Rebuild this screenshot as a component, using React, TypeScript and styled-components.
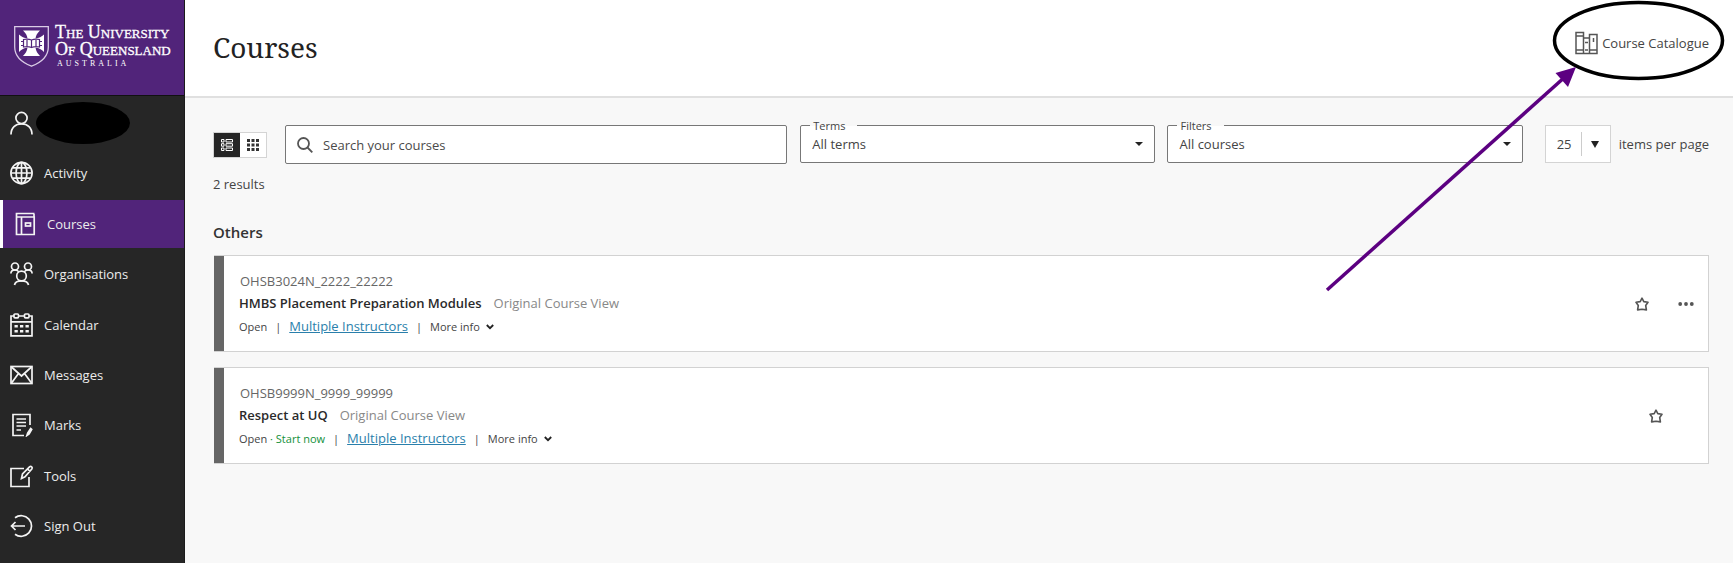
import React from 'react';
import styled, { createGlobalStyle } from 'styled-components';

const GlobalStyle = createGlobalStyle`
  *, *::before, *::after { box-sizing: border-box; }
  body {
    margin: 0;
    background: #f8f8f8;
    color: #444;
    font-family: "Open Sans", "Noto Sans", sans-serif;
    font-size: 13px;
    line-height: 20px;
  }
  button, input, select { font: inherit; color: inherit; }
  a { color: inherit; }
`;

const Page = styled.div`
  position: relative;
  display: flex;
  min-height: 100vh;
`;

const Sidebar = styled.aside`
  flex: none;
  width: 185px;
  display: flex;
  flex-direction: column;
  background: #262626;
  border-right: 1px solid #1b1b1b;
`;

const Brand = styled.a`
  display: flex;
  align-items: center;
  gap: 6px;
  height: 96px;
  padding: 0 0 2px 14px;
  background: #51247a;
  border-bottom: 1px solid #111;
  color: #fff;
  text-decoration: none;
`;

const BrandText = styled.span`
  display: flex;
  flex-direction: column;
  font-family: "Liberation Serif", serif;
  font-size: 18px;
  line-height: 17px;
  font-variant: small-caps;
  white-space: nowrap;
  -webkit-text-stroke: 0.3px #fff;
`;

const BrandCountry = styled.span`
  padding-left: 2px;
  font-size: 8px;
  line-height: 12px;
  font-variant: normal;
  letter-spacing: 3px;
  -webkit-text-stroke: 0;
`;

const NavList = styled.ul`
  flex: 1;
  display: flex;
  flex-direction: column;
  justify-content: space-between;
  max-height: 467px;
  margin: 0;
  padding: 3px 0 13px;
  list-style: none;
`;

const NavLink = styled.a<{ $active?: boolean }>`
  display: flex;
  align-items: center;
  gap: ${(p) => (p.$active ? 9 : 10)}px;
  height: 48px;
  padding-left: ${(p) => (p.$active ? 11 : 10)}px;
  border-left: ${(p) => (p.$active ? '3px solid #fff' : '0')};
  background: ${(p) => (p.$active ? '#51247a' : 'transparent')};
  color: #ececec;
  text-decoration: none;
  svg { flex: none; }
`;

const Redaction = styled.span`
  width: 94px;
  height: 42px;
  margin-left: -8px;
  border-radius: 50%;
  background: #000;
`;

const Main = styled.main`
  flex: 1;
  min-width: 0;
`;

const Header = styled.header`
  display: flex;
  align-items: center;
  justify-content: space-between;
  height: 98px;
  padding: 0 24px 2px 28px;
  background: #fff;
  border-bottom: 2px solid #e0e0e0;
`;

const Title = styled.h1`
  margin: 0;
  color: #222;
  font-family: "Noto Serif", "DejaVu Serif", serif;
  font-size: 28px;
  line-height: 32px;
  font-weight: 400;
`;

const CatalogueLink = styled.a`
  display: flex;
  align-items: center;
  gap: 4px;
  padding-bottom: 8px;
  text-decoration: none;
`;

const Content = styled.div`
  padding: 27px 24px 24px 28px;
`;

const Toolbar = styled.div`
  display: flex;
  align-items: flex-start;
`;

const ViewToggle = styled.div`
  flex: none;
  display: flex;
  margin: 7px 18px 0 0;
  border: 1px solid #d4d4d4;
`;

const ToggleButton = styled.button<{ $active?: boolean }>`
  display: grid;
  place-items: center;
  width: 26px;
  height: 24px;
  padding: 0;
  border: 0;
  background: ${(p) => (p.$active ? '#262626' : '#fff')};
  color: ${(p) => (p.$active ? '#fff' : '#333')};
`;

const SearchBox = styled.label`
  flex: 478 1 0;
  display: flex;
  align-items: center;
  gap: 10px;
  height: 39px;
  margin-right: 13px;
  padding: 0 11px;
  border: 1px solid #777;
  border-radius: 2px;
  background: #fff;
`;

const SearchInput = styled.input`
  flex: 1;
  min-width: 0;
  padding: 0;
  border: 0;
  outline: 0;
  background: transparent;
  &::placeholder { color: #4a4a4a; opacity: 1; }
`;

const SelectBox = styled.div`
  position: relative;
  flex: 353 1 0;
  display: flex;
  align-items: center;
  height: 38px;
  margin-right: 12px;
  border: 1px solid #777;
  border-radius: 2px;
  background: #fff;
  svg { flex: none; margin-right: 11px; }
`;

const SelectLabel = styled.label`
  position: absolute;
  top: -8px;
  left: 9px;
  padding: 0 12px 0 3px;
  background: linear-gradient(#f8f8f8 50%, #fff 50%);
  font-size: 11px;
  line-height: 16px;
`;

const Select = styled.select`
  flex: 1;
  min-width: 0;
  padding: 0 11px;
  border: 0;
  outline: 0;
  background: transparent;
  appearance: none;
`;

const PageSize = styled.div`
  flex: none;
  display: flex;
  align-items: center;
  gap: 8px;
  margin-left: 10px;
`;

const PageSizeBox = styled.div`
  display: flex;
  align-items: center;
  width: 66px;
  height: 38px;
  border: 1px solid #d4d4d4;
  background: #fff;
`;

const PageSizeSelect = styled.select`
  width: 36px;
  height: 24px;
  padding: 0 0 0 11px;
  border: 0;
  border-right: 1px solid #ccc;
  background: transparent;
  appearance: none;
`;

const Arrow = styled.svg`
  display: block;
  margin-left: 9px;
`;

const Results = styled.p`
  margin: 10px 0 0;
`;

const GroupTitle = styled.h2`
  margin: 28px 0 13px;
  color: #333;
  font-size: 15px;
  line-height: 20px;
  font-weight: 600;
`;

const CourseList = styled.div`
  display: flex;
  flex-direction: column;
  gap: 15px;
  margin-left: 1px;
`;

const Card = styled.article`
  display: flex;
  align-items: center;
  min-height: 97px;
  border: 1px solid #d2d2d2;
  border-left: 0;
  background: #fff;
  &::before {
    content: "";
    align-self: stretch;
    width: 10px;
    background: #666;
  }
`;

const CardBody = styled.div`
  flex: 1;
  min-width: 0;
  padding: 1px 0 0 15px;
`;

const CourseCode = styled.div`
  padding-left: 1px;
  color: #666;
  line-height: 22px;
`;

const CourseHeading = styled.div`
  display: flex;
  gap: 12px;
  line-height: 23px;
  color: #888;
`;

const CourseName = styled.h3`
  margin: 0;
  color: #2a2a2a;
  font-size: 13px;
  line-height: 23px;
  font-weight: 600;
`;

const Meta = styled.div`
  display: flex;
  align-items: center;
  gap: 8px;
  font-size: 11px;
  line-height: 23px;
`;

const StartNow = styled.span`
  color: #13903a;
`;

const Instructors = styled.a`
  color: #2a7fab;
  font-size: 13px;
`;

const MoreInfo = styled.button`
  display: flex;
  align-items: center;
  gap: 6px;
  padding: 0;
  border: 0;
  background: none;
`;

const Actions = styled.div<{ $single?: boolean }>`
  display: flex;
  gap: 22px;
  padding-right: ${(p) => (p.$single ? 41 : 11)}px;
`;

const IconButton = styled.button`
  display: grid;
  place-items: center;
  width: 22px;
  height: 24px;
  padding: 0;
  border: 0;
  background: none;
  color: #555;
`;

const Annotation = styled.svg`
  position: absolute;
  top: 0;
  right: 0;
  pointer-events: none;
`;

const NavSvg = ({ children }: { children: React.ReactNode }) => (
  <svg width="24" height="24" viewBox="0 0 24 24" fill="none" stroke="#f4f4f4" strokeWidth="1.7" aria-hidden="true">
    {children}
  </svg>
);

const icons: Record<string, React.ReactNode> = {
  Profile: (
    <NavSvg>
      <circle cx="11.5" cy="7" r="5.6" />
      <path d="M1 23.5C1 16.5 5.5 12.8 11.5 12.8S22 16.500 22 23.500" />
    </NavSvg>
  ),
  Activity: (
    <NavSvg>
      <circle cx="11.500" cy="12" r="10.600" />
      <ellipse cx="11.500" cy="12" rx="5.400" ry="10.600" />
      <path d="M11.500 1.500v21M1 12h21M2.500 6.800h18M2.500 17.200h18" />
    </NavSvg>
  ),
  Courses: (
    <NavSvg>
      <path d="M20.500 1.500H2.500v21h17.700V5H3M7.500 5v17.500M20 2v3" />
      <rect x="11.500" y="11" width="5" height="3" />
    </NavSvg>
  ),
  Organisations: (
    <NavSvg>
      <circle cx="5" cy="4.500" r="3.500" />
      <circle cx="18" cy="4.500" r="3.500" />
      <circle cx="11.500" cy="14" r="4.800" />
      <path d="M.9 11.500C.9 9 2.500 8 5 8s3.400 1 4 2.200M22.100 11.500C22.100 9 20.500 8 18 8s-3.400 1-4 2.200M4.500 23c.5-3 3.500-4.200 7-4.200s6.500 1.200 7 4.200" />
    </NavSvg>
  ),
  Calendar: (
    <NavSvg>
      <path d="M4 3H1v19.800h21V3h-3M8.500 3h6M1 8.800h21" />
      <rect x="4" y="1" width="4.500" height="3.800" rx="1" />
      <rect x="14.500" y="1" width="4.500" height="3.800" rx="1" />
      <path d="M4.500 13.200h3.300M10 13.200h3.300M15.500 13.200h3.300M4.500 18.200h3.300M10 18.200h3.300M15.500 18.200h3.300" strokeWidth="2.600" />
    </NavSvg>
  ),
  Messages: (
    <NavSvg>
      <rect x="1" y="3.500" width="21" height="17" />
      <path d="M1.500 4l10 9 10-9M1.500 20l7-9.500M21.500 20l-7-9.500" />
    </NavSvg>
  ),
  Marks: (
    <NavSvg>
      <path d="M20 12V1.500H3v21h11M6.500 6h9.500M6.500 9.500h9.500M6.500 13h9.500M6.500 17h4.500" />
      <path d="M20.700 15.500l-3 4.500-.8 2.500 2.200-1.500 2.600-4.500z" fill="#f4f4f4" />
    </NavSvg>
  ),
  Tools: (
    <NavSvg>
      <path d="M14 4.500H1v18h18V13" />
      <path d="M11.500 14.500l1-4.500 7-7.200c1.600-1.300 3.500.5 2.300 2.200L15 12.800zM17.500 5l2.600 2.400" />
    </NavSvg>
  ),
  'Sign Out': (
    <NavSvg>
      <path d="M5 3.800a10.300 10.300 0 1 1 0 16.400M15 12H1.500M5.500 8l-4 4 4 4" />
    </NavSvg>
  ),
};

const navItems = ['Activity', 'Courses', 'Organisations', 'Calendar', 'Messages', 'Marks', 'Tools', 'Sign Out'];

const Crest = () => (
  <svg width="35" height="41" viewBox="0 0 35 41" fill="none" aria-hidden="true">
    <path d="M.7.700h33.600V21c0 9-6 15-16.800 19.200C6.700 36 .7 30 .7 21z" stroke="#d9cbe5" strokeWidth="1.300" />
    <path d="M9 4.500h17c-2.800 2.500-4 5-4.500 8 3.500-.5 6-1.500 8.500-4v17.500c-2.500-2.500-5-4-8.500-4.500.5 3.500 2 6 4.500 8.500H9c2.500-2.500 4-5 4.500-8.500-3.500.5-6 2-8.500 4.500V8.500c2.500 2.500 5 3.500 8.500 4C13 9.500 11.800 7 9 4.500z" fill="#fff" />
    <path d="M9.500 13.500c3-.8 5.500-.6 8 .5 2.500-1.100 5-1.300 8-.5v7.500c-3-.8-5.500-.6-8 .5-2.500-1.100-5-1.300-8-.5zM17.500 14v7.500M13 14v6.500M22 14v6.500" stroke="#51247a" strokeWidth="1.200" />
    <path d="M7 15.500h2.500M7 19.500h2.500M25.500 15.500H28M25.500 19.500H28" stroke="#51247a" strokeWidth="1.200" />
  </svg>
);

const Star = () => (
  <svg width="14" height="14" viewBox="0 0 14 14" fill="none" stroke="currentColor" strokeWidth="1.600" strokeLinejoin="round" aria-hidden="true">
    <path d="M7 1.100l1.800 3.500 4.200.7-2.300 3.200.7 4.400L7 12.200l-4.400.7.7-4.400L1 5.300l4.200-.7z" />
  </svg>
);

const Triangle = ({ size }: { size: number }) => (
  <svg width="8" height={size} viewBox="0 0 8 8" preserveAspectRatio="none" aria-hidden="true">
    <path d="M0 0h8L4 8z" fill="#222" />
  </svg>
);

interface Course {
  code: string;
  name: string;
  startNow?: boolean;
  menu?: boolean;
}

const courses: Course[] = [
  { code: 'OHSB3024N_2222_22222', name: 'HMBS Placement Preparation Modules', menu: true },
  { code: 'OHSB9999N_9999_99999', name: 'Respect at UQ', startNow: true },
];

const CourseCard = ({ code, name, startNow, menu }: Course) => (
  <Card>
    <CardBody>
      <CourseCode>{code}</CourseCode>
      <CourseHeading>
        <CourseName>{name}</CourseName>
        <span>Original Course View</span>
      </CourseHeading>
      <Meta>
        <span>
          Open{startNow && <StartNow> · Start now</StartNow>}
        </span>
        <span>|</span>
        <Instructors href="#instructors">Multiple Instructors</Instructors>
        <span>|</span>
        <MoreInfo type="button">
          More info
          <svg width="8" height="6" viewBox="0 0 8 6" fill="none" stroke="#222" strokeWidth="1.800" aria-hidden="true">
            <path d="M.8 1L4 4.200 7.200 1" />
          </svg>
        </MoreInfo>
      </Meta>
    </CardBody>
    <Actions $single={!menu}>
      <IconButton type="button" aria-label={`Add ${name} to favourites`}>
        <Star />
      </IconButton>
      {menu && (
        <IconButton type="button" aria-label={`More options for ${name}`}>
          <svg width="16" height="4" viewBox="0 0 16 4" fill="currentColor" aria-hidden="true">
            <circle cx="2.200" cy="2" r="1.900" />
            <circle cx="8" cy="2" r="1.900" />
            <circle cx="13.800" cy="2" r="1.900" />
          </svg>
        </IconButton>
      )}
    </Actions>
  </Card>
);

export default function App() {
  return (
    <>
      <GlobalStyle />
      <Page>
        <Sidebar>
          <Brand href="#home">
            <Crest />
            <BrandText>
              <span>The University</span>
              <span>Of Queensland</span>
              <BrandCountry>AUSTRALIA</BrandCountry>
            </BrandText>
          </Brand>
          <NavList>
            <li>
              <NavLink href="#profile" aria-label="Profile">
                {icons.Profile}
                <Redaction />
              </NavLink>
            </li>
            {navItems.map((item) => (
              <li key={item}>
                <NavLink href="#nav" $active={item === 'Courses'}>
                  {icons[item]}
                  {item}
                </NavLink>
              </li>
            ))}
          </NavList>
        </Sidebar>
        <Main>
          <Header>
            <Title>Courses</Title>
            <CatalogueLink href="#catalogue">
              <svg width="23" height="24" viewBox="0 0 23 24" fill="none" stroke="#555" strokeWidth="1.500" aria-hidden="true">
                <path d="M1 1.500h7.500v21H1zM1 5h7.500M1 19h7.500M8.500 7h6v15.500h-6M14.500 3.500H22v19h-7.500zM14.500 19H22M10 11.500h3M10 19h3M18.500 7v4" />
              </svg>
              Course Catalogue
            </CatalogueLink>
          </Header>
          <Content>
            <Toolbar>
              <ViewToggle>
                <ToggleButton type="button" $active aria-label="List view">
                  <svg width="12" height="12" viewBox="0 0 12 12" fill="none" stroke="currentColor" strokeWidth="1" aria-hidden="true">
                    <path d="M.5.500h2.500v2.500H.5zM.5 4.700h2.500v2.500H.5zM.5 9h2.500v2.500H.5zM5 .5h6.500v2.500H5zM5 4.700h6.500v2.500H5zM5 9h6.500v2.500H5z" />
                  </svg>
                </ToggleButton>
                <ToggleButton type="button" aria-label="Grid view">
                  <svg width="12" height="12" viewBox="0 0 12 12" fill="currentColor" aria-hidden="true">
                    <path d="M0 0h3v3H0zM4.500 0h3v3h-3zM9 0h3v3H9zM0 4.500h3v3H0zM4.500 4.500h3v3h-3zM9 4.500h3v3H9zM0 9h3v3H0zM4.500 9h3v3h-3zM9 9h3v3H9z" />
                  </svg>
                </ToggleButton>
              </ViewToggle>
              <SearchBox>
                <svg width="16" height="16" viewBox="0 0 16 16" fill="none" stroke="#555" strokeWidth="1.800" aria-hidden="true">
                  <circle cx="6.500" cy="6.500" r="5.500" />
                  <path d="M10.500 10.500l4.800 4.800" />
                </svg>
                <SearchInput type="text" placeholder="Search your courses" aria-label="Search your courses" />
              </SearchBox>
              <SelectBox>
                <SelectLabel htmlFor="terms">Terms</SelectLabel>
                <Select id="terms">
                  <option>All terms</option>
                </Select>
                <Triangle size={4} />
              </SelectBox>
              <SelectBox>
                <SelectLabel htmlFor="filters">Filters</SelectLabel>
                <Select id="filters">
                  <option>All courses</option>
                </Select>
                <Triangle size={4} />
              </SelectBox>
              <PageSize>
                <PageSizeBox>
                  <PageSizeSelect id="page-size">
                    <option>25</option>
                  </PageSizeSelect>
                  <Arrow width="8" height="7" viewBox="0 0 8 7" aria-hidden="true">
                    <path d="M0 0h8L4 7z" fill="#222" />
                  </Arrow>
                </PageSizeBox>
                <label htmlFor="page-size">items per page</label>
              </PageSize>
            </Toolbar>
            <Results>2 results</Results>
            <GroupTitle>Others</GroupTitle>
            <CourseList>
              {courses.map((course) => (
                <CourseCard key={course.code} {...course} />
              ))}
            </CourseList>
          </Content>
        </Main>
        <Annotation width="426" height="300" viewBox="1307 0 426 300" fill="none" aria-hidden="true">
          <ellipse cx="1638.500" cy="40.500" rx="84" ry="38" stroke="#000" strokeWidth="3.500" />
          <path d="M1327 290L1566 76" stroke="#5c0081" strokeWidth="3.500" />
          <path d="M1576 67l-8 20-12.500-14z" fill="#5c0081" />
        </Annotation>
      </Page>
    </>
  );
}
